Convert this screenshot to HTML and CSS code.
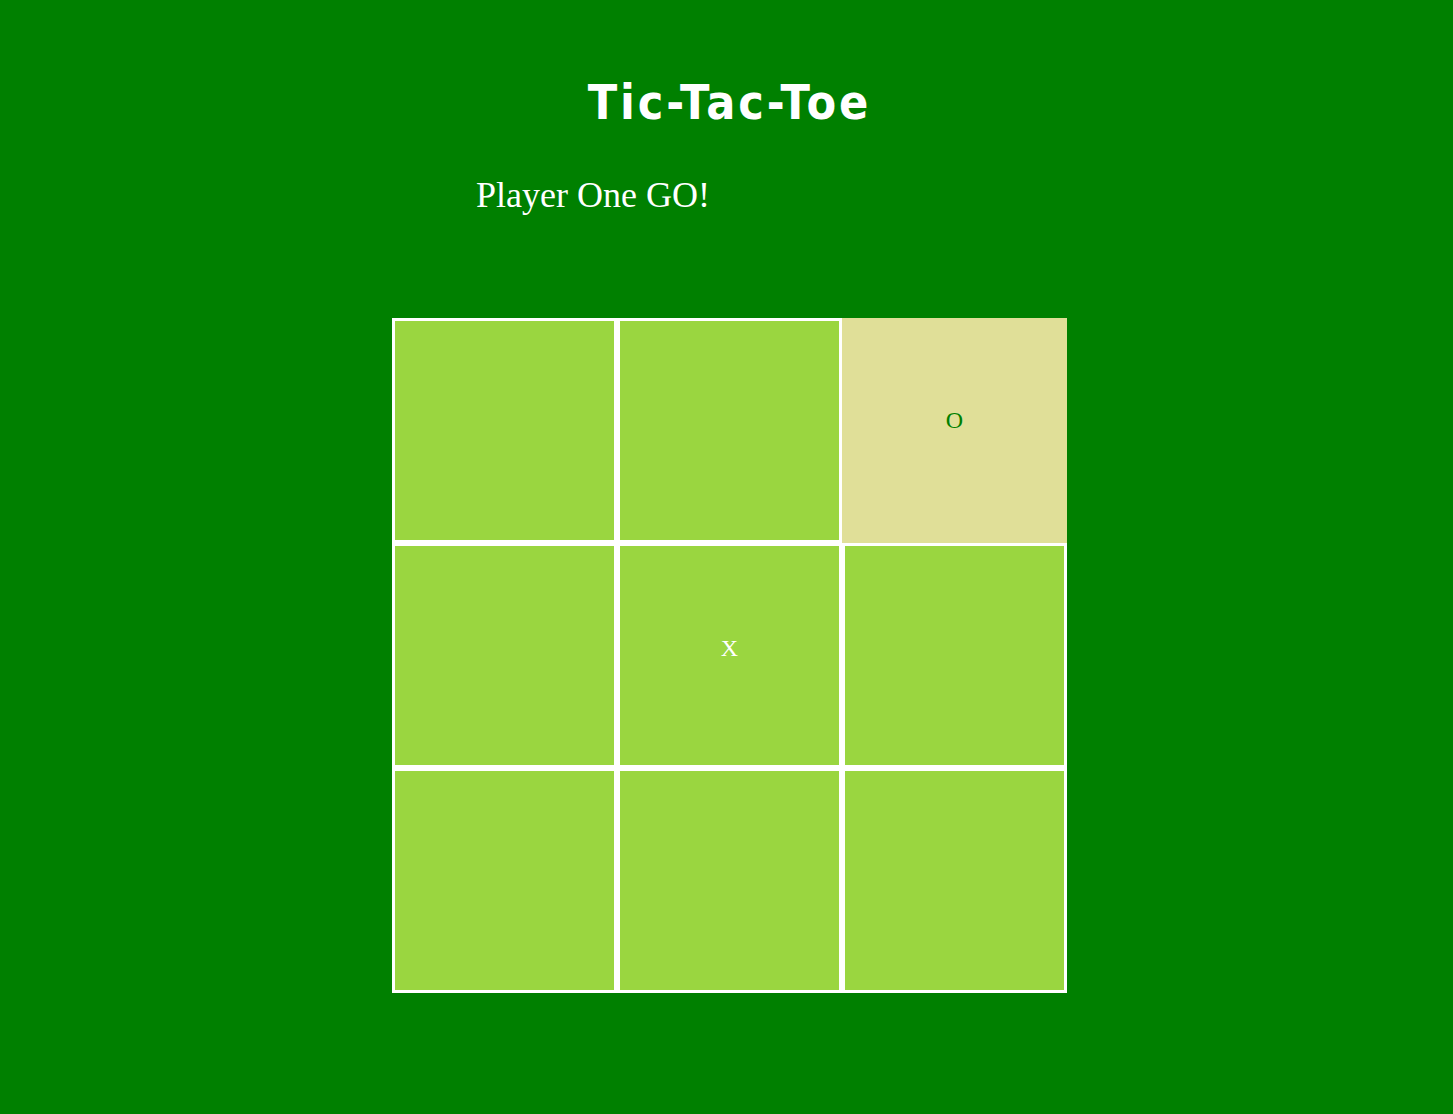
FILE: index.html
```html
<!DOCTYPE html>
<html>
<head>
<meta charset="utf-8">
<title>Tic-Tac-Toe</title>
<link rel="stylesheet" href="styles.css">
</head>
<body>
<main class="page">
  <h1 class="title">Tic-Tac-Toe</h1>
  <div class="status-wrap"><p class="status">Player One GO!</p></div>
  <div class="board">
    <div class="cell"></div>
    <div class="cell"></div>
    <div class="cell cell--hover"><span class="mark mark--o">O</span></div>
    <div class="cell"></div>
    <div class="cell"><span class="mark mark--x">X</span></div>
    <div class="cell"></div>
    <div class="cell"></div>
    <div class="cell"></div>
    <div class="cell"></div>
  </div>
</main>
</body>
</html>
```
FILE: styles.css
```css
html, body {
  margin: 0;
  padding: 0;
}
body {
  background: #008000;
  min-height: 1114px;
  color: #ffffff;
}
.page {
  display: flex;
  flex-direction: column;
  align-items: center;
  padding-left: 6px;
}
.title {
  margin: 72px 0 0 0;
  font-family: "DejaVu Sans Condensed", "DejaVu Sans", sans-serif;
  font-weight: bold;
  font-size: 48px;
  line-height: 60px;
  letter-spacing: 2.9px;
  color: #ffffff;
}
.status-wrap {
  width: 675px;
  margin-top: 42px;
}
.status {
  margin: 0 0 0 84px;
  font-family: "Liberation Serif", "Times New Roman", serif;
  font-size: 36px;
  line-height: 42px;
  color: #ffffff;
}
.board {
  margin-top: 102px;
  display: grid;
  grid-template-columns: repeat(3, 225px);
  grid-template-rows: repeat(3, 225px);
}
.cell {
  box-sizing: border-box;
  border: 3px solid #ffffff;
  background: #9ad640;
  display: flex;
  justify-content: center;
  align-items: center;
  padding-bottom: 14px;
}
.cell--hover {
  background: #e0df98;
  border-color: #e0df98;
  padding-bottom: 20px;
}
.mark {
  font-family: "Liberation Serif", "Times New Roman", serif;
  font-size: 24px;
}
.mark--o {
  color: #008000;
}
.mark--x {
  color: #ffffff;
}
```
